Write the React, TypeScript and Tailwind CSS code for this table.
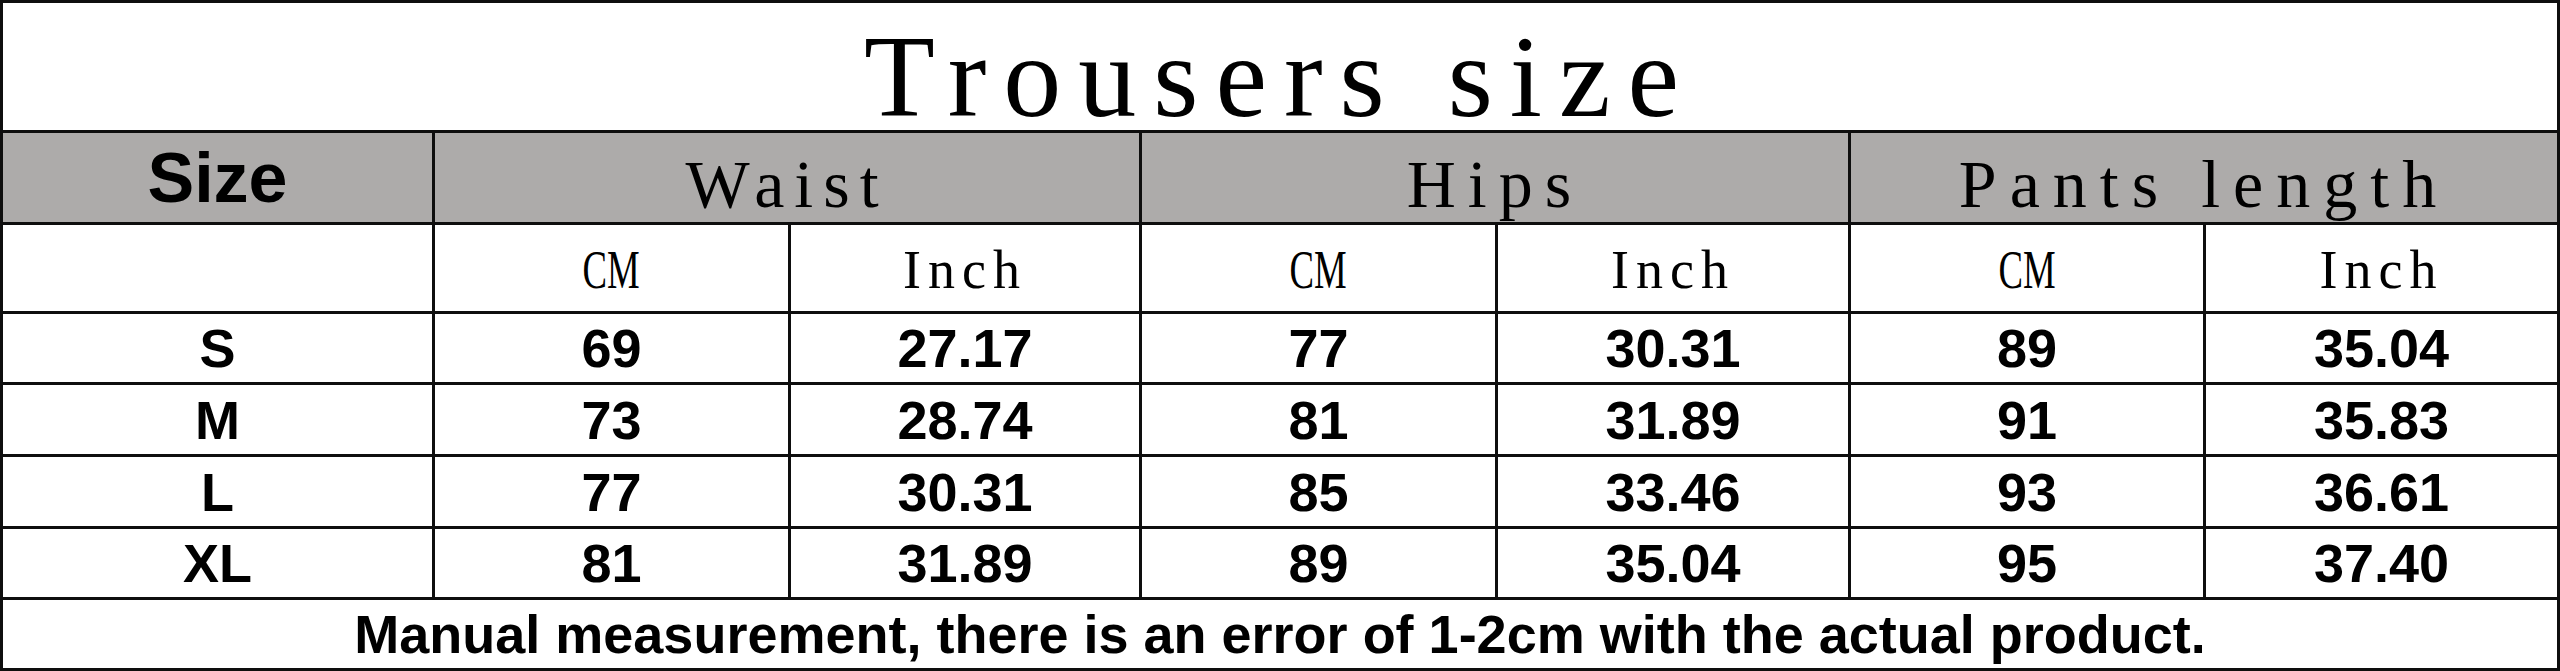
import React from "react";

const serif = "font-['Liberation_Serif',serif]";
const sans = "font-['Liberation_Sans',Arial,sans-serif] font-bold";

const rows = [
  { size: "S", values: ["69", "27.17", "77", "30.31", "89", "35.04"] },
  { size: "M", values: ["73", "28.74", "81", "31.89", "91", "35.83"] },
  { size: "L", values: ["77", "30.31", "85", "33.46", "93", "36.61"] },
  { size: "XL", values: ["81", "31.89", "89", "35.04", "95", "37.40"] },
];

function Cell({
  children,
  className = "",
  gray = false,
}: {
  children?: React.ReactNode;
  className?: string;
  gray?: boolean;
}) {
  return (
    <div
      className={`flex items-center justify-center text-black leading-none ${
        gray ? "bg-[#adabaa]" : "bg-white"
      } ${className}`}
    >
      {children}
    </div>
  );
}

export default function App() {
  return (
    <div className="w-[2560px] h-[671px] bg-white">
      <div className="grid h-full w-full grid-cols-[429px_353px_348px_353px_350px_352px_351px] grid-rows-[127px_89px_86px_68px_69px_69px_68px_68px] gap-[3px] bg-[#0e0e0e] p-[3px]">
        {/* Title */}
        <Cell className={`col-span-7 pt-[20px] text-[116px] tracking-[17px] ${serif}`}>
          Trousers size
        </Cell>

        {/* Group header */}
        <Cell gray className={`text-[70px] ${sans}`}>
          Size
        </Cell>
        <Cell gray className={`col-span-2 pt-[12px] text-[68px] tracking-[10px] ${serif}`}>
          Waist
        </Cell>
        <Cell gray className={`col-span-2 pt-[12px] text-[68px] tracking-[12px] ${serif}`}>
          Hips
        </Cell>
        <Cell gray className={`col-span-2 pt-[12px] text-[68px] tracking-[13px] ${serif}`}>
          Pants length
        </Cell>

        {/* Units */}
        <Cell />
        {["Waist", "Hips", "Pants"].map((g) => (
          <React.Fragment key={g}>
            <Cell className={`pt-[4px] text-[54px] ${serif}`}>
              <span className="inline-block scale-x-[0.68]">CM</span>
            </Cell>
            <Cell className={`pt-[4px] text-[54px] tracking-[7px] ${serif}`}>Inch</Cell>
          </React.Fragment>
        ))}

        {/* Data */}
        {rows.map((r) => (
          <React.Fragment key={r.size}>
            <Cell className={`text-[54px] ${sans}`}>{r.size}</Cell>
            {r.values.map((v, i) => (
              <Cell key={i} className={`text-[54px] ${sans}`}>
                {v}
              </Cell>
            ))}
          </React.Fragment>
        ))}

        {/* Footer note */}
        <Cell className={`col-span-7 text-[54px] ${sans}`}>
          Manual measurement, there is an error of 1-2cm with the actual product.
        </Cell>
      </div>
    </div>
  );
}
